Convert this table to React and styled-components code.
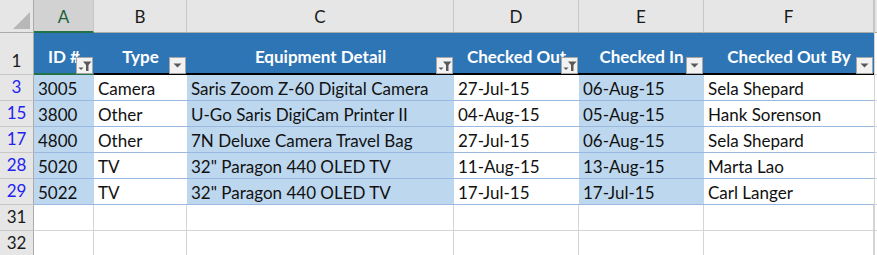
import React from "react";
import styled, { createGlobalStyle } from "styled-components";

const columns = [
  { letter: "A", title: "ID #", filtered: true, shade: true },
  { letter: "B", title: "Type", filtered: false, shade: false },
  { letter: "C", title: "Equipment Detail", filtered: true, shade: true },
  { letter: "D", title: "Checked Out", filtered: true, shade: false },
  { letter: "E", title: "Checked In", filtered: false, shade: true },
  { letter: "F", title: "Checked Out By", filtered: false, shade: false },
];

const rows = [
  { num: 3, cells: ["3005", "Camera", "Saris Zoom Z-60 Digital Camera", "27-Jul-15", "06-Aug-15", "Sela Shepard"] },
  { num: 15, cells: ["3800", "Other", "U-Go Saris DigiCam Printer II", "04-Aug-15", "05-Aug-15", "Hank Sorenson"] },
  { num: 17, cells: ["4800", "Other", "7N Deluxe Camera Travel Bag", "27-Jul-15", "06-Aug-15", "Sela Shepard"] },
  { num: 28, cells: ["5020", "TV", "32\" Paragon 440 OLED TV", "11-Aug-15", "13-Aug-15", "Marta Lao"] },
  { num: 29, cells: ["5022", "TV", "32\" Paragon 440 OLED TV", "17-Jul-15", "17-Jul-15", "Carl Langer"] },
];

const emptyRows = [31, 32];

const GlobalStyle = createGlobalStyle`
  body {
    margin: 0;
    background: #ffffff;
    font-family: Lato, "Open Sans", sans-serif;
  }
`;

const Sheet = styled.div`
  display: grid;
  grid-template-columns: 34px 60px 93px 267px 125px 125px 170px 1fr;
  grid-template-rows: 33px 42px repeat(7, 26px);
  width: 877px;
  height: 255px;
  overflow: hidden;
`;

const Corner = styled.div`
  position: relative;
  background: #e6e6e6;
  border-right: 1px solid #ababab;
  border-bottom: 1px solid #ababab;
  box-sizing: border-box;
  &::after {
    content: "";
    position: absolute;
    right: 3px;
    bottom: 3px;
    width: 0;
    height: 0;
    border-left: 17px solid transparent;
    border-bottom: 17px solid #b7b7b7;
  }
`;

const ColHead = styled.div`
  display: flex;
  align-items: center;
  justify-content: center;
  box-sizing: border-box;
  background: ${(p) => (p.$selected ? "#d2d2d2" : "#e6e6e6")};
  border-right: 1px solid #c6c6c6;
  border-bottom: ${(p) => (p.$selected ? "2px solid #217346" : "1px solid #ababab")};
  color: ${(p) => (p.$selected ? "#1d5f3b" : "#1a1a1a")};
  font-family: Lato, sans-serif;
  font-size: 17px;
  padding-top: ${(p) => (p.$selected ? "2px" : "1px")};
`;

const RowHead = styled.div`
  display: flex;
  align-items: flex-end;
  justify-content: center;
  box-sizing: border-box;
  background: #e6e6e6;
  border-right: 1px solid #ababab;
  border-bottom: 1px solid #c8c8c8;
  color: ${(p) => (p.$filtered ? "#2323f0" : "#1a1a1a")};
  font-family: Lato, sans-serif;
  font-size: 17px;
  padding-bottom: ${(p) => (p.$tall ? "3px" : "3px")};
`;

const HeaderCell = styled.div`
  position: relative;
  display: flex;
  align-items: flex-end;
  justify-content: center;
  box-sizing: border-box;
  background: #2e75b6;
  border-bottom: 2px solid ${(p) => (p.$selected ? "#217346" : "#000000")};
  color: #ffffff;
  font-family: Lato, sans-serif;
  font-weight: 700;
  font-size: 17px;
  padding-bottom: 6px;
  white-space: nowrap;
`;

const FilterButton = styled.div`
  position: absolute;
  right: 1px;
  bottom: -1px;
  width: 17px;
  height: 17px;
  box-sizing: border-box;
  background: #f2f2f2;
  border: 1px solid #a6a6a6;
  display: flex;
  align-items: center;
  justify-content: center;
`;

const DataCell = styled.div`
  display: flex;
  align-items: center;
  box-sizing: border-box;
  padding: 1px 4px 0;
  background: ${(p) => (p.$shade ? "#bdd7ee" : "#ffffff")};
  border-bottom: 1px solid #9bb9e0;
  color: #111111;
  font-family: Lato, sans-serif;
  font-size: 17px;
  white-space: nowrap;
  overflow: hidden;
`;

const EmptyCell = styled.div`
  box-sizing: border-box;
  background: #ffffff;
  border-right: 1px solid #d4d4d4;
  border-bottom: 1px solid #d4d4d4;
`;

const Spacer = styled.div`
  box-sizing: border-box;
  background: ${(p) => (p.$grey ? "#e6e6e6" : "#ffffff")};
  border-left: 1px solid ${(p) => (p.$grey ? "#c6c6c6" : "#d4d4d4")};
  border-bottom: 1px solid ${(p) => (p.$grey ? "#ababab" : "#d4d4d4")};
`;

const DropIcon = () => (
  <svg width="9" height="5" viewBox="0 0 9 5">
    <path d="M0.5 0.5 H8.5 L4.5 4.5 Z" fill="#595959" />
  </svg>
);

const FunnelIcon = () => (
  <svg width="14" height="12" viewBox="0 0 14 12">
    <path d="M0.5 7.5 H5.5 L3 10 Z" fill="#595959" />
    <path d="M5 1.5 H13.5 L10.5 5 V11 H8 V5 Z" fill="#595959" />
  </svg>
);

const App = () => {
  return (
    <>
      <GlobalStyle />
      <Sheet>
        <Corner />
        {columns.map((col, i) => (
          <ColHead key={col.letter} $selected={i === 0}>
            {col.letter}
          </ColHead>
        ))}
        <Spacer $grey />

        <RowHead $tall>1</RowHead>
        {columns.map((col, i) => (
          <HeaderCell key={col.title} $selected={i === 0}>
            {col.title}
            <FilterButton>{col.filtered ? <FunnelIcon /> : <DropIcon />}</FilterButton>
          </HeaderCell>
        ))}
        <Spacer />

        {rows.map((row) => (
          <React.Fragment key={row.num}>
            <RowHead $filtered>{row.num}</RowHead>
            {row.cells.map((text, i) => (
              <DataCell key={i} $shade={columns[i].shade}>
                {text}
              </DataCell>
            ))}
            <Spacer />
          </React.Fragment>
        ))}

        {emptyRows.map((num) => (
          <React.Fragment key={num}>
            <RowHead>{num}</RowHead>
            {columns.map((col) => (
              <EmptyCell key={col.letter} />
            ))}
            <Spacer />
          </React.Fragment>
        ))}
      </Sheet>
    </>
  );
};

export default App;
